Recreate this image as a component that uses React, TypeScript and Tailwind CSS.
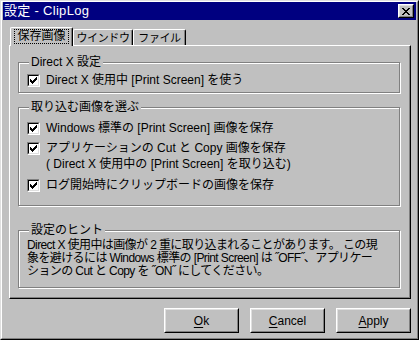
import React from "react";

const font = "font-['Liberation_Sans','Noto_Sans_CJK_JP',sans-serif]";

function Check() {
  // Win95 style 7x7 pixel check mark
  const cols = [2, 3, 4, 3, 2, 1, 0];
  return (
    <svg width="7" height="7" viewBox="0 0 7 7" shapeRendering="crispEdges">
      <path d={cols.map((t, i) => `M${i} ${t}h1v3h-1z`).join("")} fill="#000" />
    </svg>
  );
}

function CheckBox() {
  return (
    <div className="w-[13px] h-[13px] shrink-0 border border-t-[#808080] border-l-[#808080] border-b-white border-r-white">
      <div className="w-full h-full bg-white border border-t-black border-l-black border-b-[#dfdfdf] border-r-[#dfdfdf] flex items-center justify-center">
        <Check />
      </div>
    </div>
  );
}

function Group({ label, className, children }: { label: string; className: string; children: React.ReactNode }) {
  return (
    <div className={`relative w-[382px] border border-[#808080] shadow-[inset_1px_1px_0_#fff,1px_1px_0_#fff] ${className}`}>
      <span className="absolute left-[10px] top-[-8px] bg-[#c0c0c0] px-[2px] leading-[14px]">{label}</span>
      {children}
    </div>
  );
}

function Button({ k, rest }: { k: string; rest: string }) {
  return (
    <div className="w-[75px] h-[25px] border border-t-white border-l-white border-b-black border-r-black">
      <div className="w-full h-full border border-t-[#dfdfdf] border-l-[#dfdfdf] border-b-[#808080] border-r-[#808080] flex items-center justify-center text-black">
        <span>
          <span className="underline underline-offset-2">{k}</span>
          {rest}
        </span>
      </div>
    </div>
  );
}

export default function App() {
  return (
    <div className={`w-[419px] h-[340px] bg-[#c0c0c0] text-[12px] text-black ${font} border border-t-[#dfdfdf] border-l-[#dfdfdf] border-b-black border-r-black`}>
      <div className="w-full h-full border border-t-white border-l-white border-b-[#808080] border-r-[#808080] px-[1px]">
        {/* Title bar */}
        <div className="h-[18px] bg-[#000080] flex items-center justify-between pl-[1px] pr-[2px]">
          <span className="text-white text-[13px] leading-[16px] tracking-[0.3px]">設定 - ClipLog</span>
          <div className="w-[16px] h-[14px] border border-t-white border-l-white border-b-black border-r-black bg-[#c0c0c0]">
            <div className="w-full h-full border border-t-[#dfdfdf] border-l-[#dfdfdf] border-b-[#808080] border-r-[#808080] flex items-center justify-center">
              <svg width="8" height="7" viewBox="0 0 8 7" shapeRendering="crispEdges">
                <path d="M0 0h2v1h-2zM6 0h2v1h-2zM1 1h2v1h-2zM5 1h2v1h-2zM2 2h4v1h-4zM3 3h2v1h-2zM2 4h4v1h-4zM1 5h2v1h-2zM5 5h2v1h-2zM0 6h2v1h-2zM6 6h2v1h-2z" fill="#000" />
              </svg>
            </div>
          </div>
        </div>

        {/* Tabs */}
        <div className="mt-[7px] h-[18px] flex items-end pl-[6px] whitespace-nowrap">
          <div className="relative z-10 ml-[1px] w-[63px] h-[19px] mb-[-1px] bg-[#c0c0c0] border-l border-t border-white border-r border-r-black rounded-t-[2px] shadow-[inset_-1px_0_0_#808080] flex items-start justify-center pt-[2px]">
            <span className="px-[2px] leading-[13px] outline outline-1 outline-dotted outline-black">保存画像</span>
          </div>
          <div className="w-[60px] h-[16px] border-l border-t border-white border-r border-r-black rounded-t-[2px] shadow-[inset_-1px_0_0_#808080] flex items-center justify-center leading-[14px] text-[11px] tracking-[-0.4px]">
            ウインドウ
          </div>
          <div className="w-[53px] h-[16px] border-l border-t border-white border-r border-r-black rounded-t-[2px] shadow-[inset_-1px_0_0_#808080] flex items-center justify-center leading-[14px] text-[11px] tracking-[-0.4px]">
            ファイル
          </div>
        </div>

        {/* Panel */}
        <div className="ml-[6px] w-[402px] h-[254px] border border-t-white border-l-white border-b-black border-r-black shadow-[inset_-1px_-1px_0_#808080] pl-[8px] pt-[16px]">
          <Group label="Direct X 設定" className="h-[31px] pt-[11px] pl-[8px]">
            <div className="flex items-center gap-[6px] leading-[13px]">
              <CheckBox />
              <span>Direct X 使用中 [Print Screen] を使う</span>
            </div>
          </Group>

          <Group label="取り込む画像を選ぶ" className="mt-[14px] h-[99px] pt-[14px] pl-[8px]">
            <div className="flex items-center gap-[6px] leading-[13px]">
              <CheckBox />
              <span>Windows 標準の [Print Screen] 画像を保存</span>
            </div>
            <div className="mt-[7px] flex items-start gap-[6px]">
              <CheckBox />
              <span className="mt-[-2px] leading-[16px]">
                アプリケーションの Cut と Copy 画像を保存
                <br />( Direct X 使用中の [Print Screen] を取り込む)
              </span>
            </div>
            <div className="mt-[7px] flex items-center gap-[6px] leading-[13px]">
              <CheckBox />
              <span>ログ開始時にクリップボードの画像を保存</span>
            </div>
          </Group>

          <Group label="設定のヒント" className="mt-[24px] h-[58px] pt-[8px] pl-[8px]">
            <p className="leading-[13px] whitespace-nowrap tracking-[-0.6px]">
              Direct X 使用中は画像が 2 重に取り込まれることがあります。 この現
              <br />
              象を避けるには Windows 標準の [Print Screen] は ˝OFF˝、アプリケー
              <br />
              ションの Cut と Copy を ˝ON˝ にしてください。
            </p>
          </Group>
        </div>

        {/* Buttons */}
        <div className="mt-[9px] w-[408px] flex justify-end gap-[11px]">
          <Button k="O" rest="k" />
          <Button k="C" rest="ancel" />
          <Button k="A" rest="pply" />
        </div>
      </div>
    </div>
  );
}
